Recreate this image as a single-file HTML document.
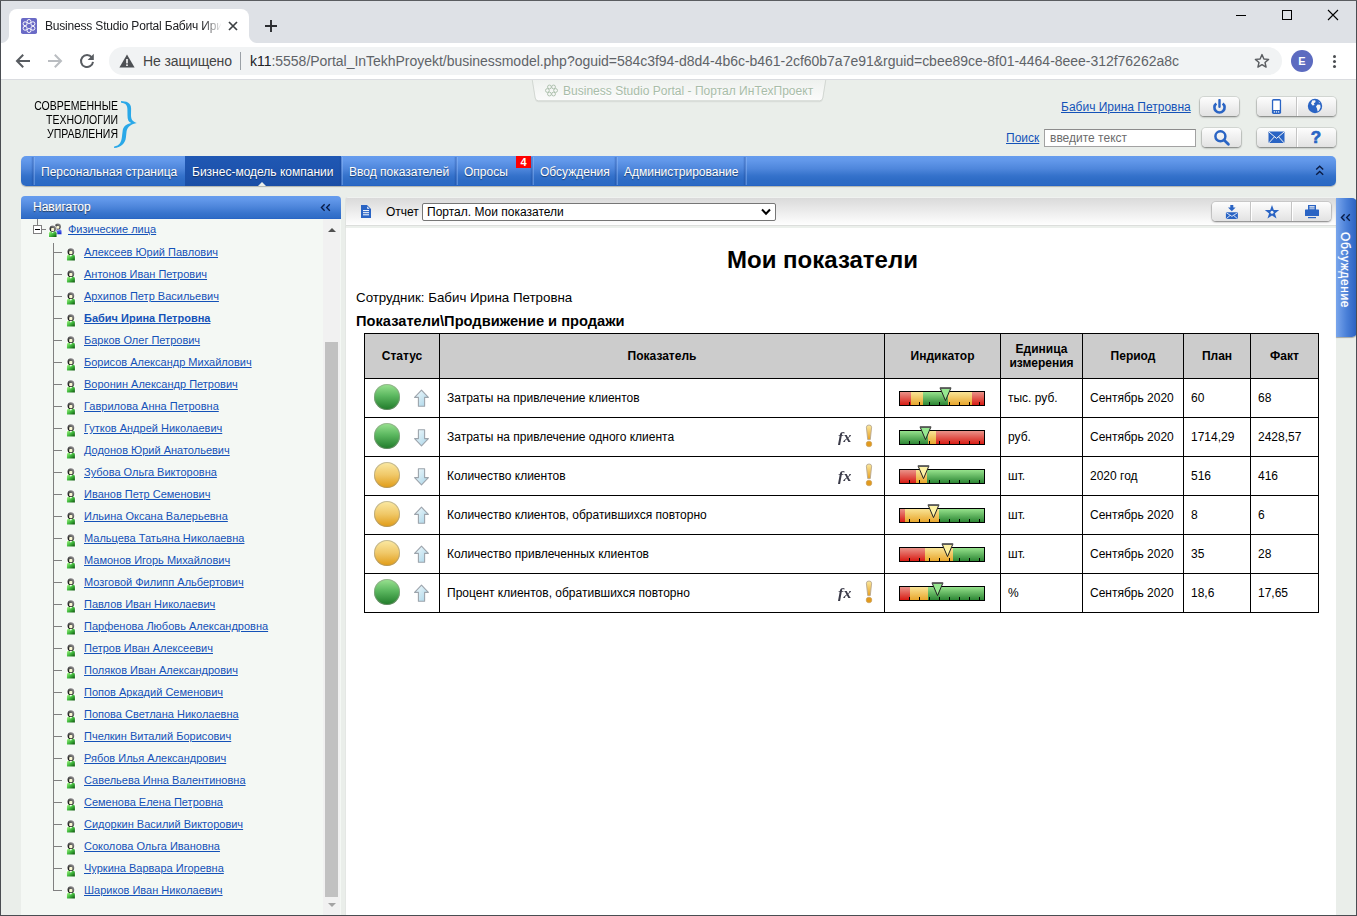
<!DOCTYPE html>
<html>
<head>
<meta charset="utf-8">
<style>
*{box-sizing:border-box;margin:0;padding:0}
html,body{width:1357px;height:916px;overflow:hidden;background:#eaeeea;font-family:"Liberation Sans",sans-serif;}
body{position:relative}
.abs{position:absolute}
a{color:#1452b8;text-decoration:underline}
/* chrome */
#winL{left:0;top:0;width:1px;height:916px;background:#4a4d52}
#winT{left:0;top:0;width:1357px;height:1px;background:#5a5c60}
#tabbar{left:1px;top:1px;width:1355px;height:42px;background:#dee1e6}
#tab{left:9px;top:9px;width:240px;height:34px;background:#fff;border-radius:8px 8px 0 0}
#tabtitle{left:45px;top:19px;font-size:12px;color:#202124;white-space:nowrap;width:176px;overflow:hidden;letter-spacing:-.19px;-webkit-mask-image:linear-gradient(90deg,#000 158px,transparent 177px);mask-image:linear-gradient(90deg,#000 158px,transparent 177px)}
#toolbar{left:1px;top:43px;width:1355px;height:37px;background:#fff;border-bottom:1px solid #dadce0}
#url{left:109px;top:47px;width:1173px;height:28px;border-radius:14px;background:#f1f3f4}
.urlt{font-size:14px;top:53px;white-space:nowrap;color:#202124}
/* page */
#page{left:1px;top:80px;width:1355px;height:836px;background:#eaeeea}
.btn{height:19px;border-radius:4px;background:linear-gradient(#fdfdfd,#e2e2e2);box-shadow:0 1px 2px rgba(0,0,0,.45),0 0 0 1px rgba(0,0,0,.08)}
#nav{left:21px;top:156px;width:1315px;height:30px;border-radius:5px;background:linear-gradient(#669cee 0%,#6298ea 15%,#4f87dc 42%,#3572cb 66%,#2d6bc5 82%,#2c6ac4 95%,#2160c4 100%);box-shadow:0 1px 1px rgba(0,0,0,.25)}
.navi{top:165px;font-size:12px;color:#fff;white-space:nowrap;text-shadow:0 1px 1px rgba(0,0,0,.45)}
.sep{top:157px;width:4px;height:28px;margin-left:-2px;background:linear-gradient(90deg,rgba(20,60,140,0) 0,rgba(20,60,140,.35) 50%,rgba(20,60,140,.5) 62%,rgba(150,190,250,.45) 63%,rgba(150,190,250,.4) 88%,rgba(150,190,250,0) 100%)}
#navact{left:185px;top:156px;width:156px;height:30px;background:linear-gradient(#2058b4,#1a4ea6)}
/* navigator */
#nvh{left:21px;top:196px;width:320px;height:23px;border-radius:4px 4px 0 0;background:linear-gradient(#669cee 0%,#6298ea 15%,#4f87dc 45%,#3874cd 75%,#2f6cc6 95%,#2361c4 100%)}
#nvb{left:21px;top:219px;width:320px;height:697px;background:#f4f8f4}
.ti{left:84px;margin-top:1px;font-size:11px;white-space:nowrap}
/* content */
#ctb{left:345px;top:197px;width:991px;height:31px;border-radius:3px 0 0 0;background:linear-gradient(#f0f2f0 0,#f0f2f0 1px,#dadada 1px,#e6e6e6 10px,#fdfdfd 27px,#fff 28px,#dcdedc 28px,#dcdedc 29px,#ecf0ec 29px,#ecf0ec 31px);border-left:1px solid #e0e3e0}
#cnt{left:345px;top:228px;width:991px;height:688px;background:#fff;border-left:1px solid #e4e7e4}
table.kpi{border-collapse:collapse;position:absolute;left:364px;top:334px;font-size:12px;color:#000}
table.kpi td,table.kpi th{border:1px solid #000;height:39px;padding:0 0 0 7px;text-align:left;vertical-align:middle;white-space:nowrap}
table.kpi th{background:#c8c8c8;height:44px;text-align:center;padding:0;font-weight:bold;line-height:14px}

#nvtrack{left:323px;top:219px;width:17px;height:697px;background:#f1f1f1}
#nvthumb{left:325px;top:342px;width:13px;height:555px;background:#c1c1c1}
.stub{left:53px;width:9px;height:1px;background:#808080}
.pi{left:66px}

#winR{left:1356px;top:0;width:1px;height:916px;background:#4a4d52}
.logo{left:0;width:118px;text-align:right;font-size:12px;color:#000;white-space:nowrap;transform:scaleX(.875);transform-origin:100% 50%;line-height:14px}
#ptab{left:534px;top:79px;width:292px;height:22px;background:#eef2ee;border:1px solid #d2d8d2;border-top:none;border-radius:0 0 6px 6px;transform:perspective(60px) rotateX(-6deg);transform-origin:50% 0}
.bsep{width:2px;height:19px;background:linear-gradient(90deg,#c4c4c4 50%,#fff 50%)}

.vl{top:333px;width:1px;height:280px;background:#000}
.hl{left:364px;width:955px;height:1px;background:#000}
.th{font-size:12px;font-weight:bold;text-align:center;line-height:14px;color:#000}
.td{font-size:12px;color:#000;white-space:nowrap;line-height:14px}
.circ{left:373.5px;width:26px;height:26px;border-radius:50%;box-shadow:inset 0 0 0 1px rgba(150,150,140,.55)}
.cg{background:linear-gradient(#9be392 0%,#5cb860 45%,#1f7a29 100%)}
.cy{background:linear-gradient(#fbeaa4 0%,#f0c868 50%,#e09a14 100%)}
.fx{left:838px;margin-top:2px;font-family:"Liberation Serif",serif;font-style:italic;font-weight:bold;font-size:14px;color:#3a3a48;line-height:16px;letter-spacing:.2px;transform:scaleX(1.12);transform-origin:0 50%}
.ind{left:899px;width:86px;height:15px;border:1px solid #000;overflow:hidden;background:#000}
.ind i{position:absolute;top:0;height:13px;margin-left:-1px}
.ind .sr{background:linear-gradient(#ea9288,#d81c14)}
.ind .sy{background:linear-gradient(#f9e496,#e8a62c)}
.ind .sg{background:linear-gradient(#96e28c,#2c8634)}
.ind b{position:absolute;left:9px;top:10px;width:71px;height:3px;background:repeating-linear-gradient(90deg,#000 0,#000 1px,transparent 1px,transparent 10px)}
#stab{left:1336px;top:198px;width:21px;height:139px;border-radius:0 5px 5px 0;background:linear-gradient(90deg,#7aa6ec 0%,#4a80d8 50%,#2a60c0 100%);box-shadow:0 1px 1px rgba(0,0,0,.3)}
#stabt{left:1337px;top:232px;width:15px;height:80px;writing-mode:vertical-rl;font-size:12px;color:#fff;letter-spacing:.62px;line-height:15px;white-space:nowrap;text-shadow:0 0 1px rgba(255,255,255,.7)}
.icorner{width:8px;height:8px}
</style>
</head>
<body>
<div class="abs" id="tabbar"></div>
<div class="abs" id="tab"></div>
<div class="abs icorner" style="left:1px;top:35px;background:radial-gradient(circle at 0 0,#dee1e6 7.5px,#fff 8.5px)"></div><div class="abs icorner" style="left:249px;top:35px;background:radial-gradient(circle at 100% 0,#dee1e6 7.5px,#fff 8.5px)"></div>
<div class="abs" id="tabtitle">Business Studio Portal Бабич Ирина</div>
<div class="abs" id="toolbar"></div>
<div class="abs" id="url"></div>
<div class="abs urlt" style="left:143px;color:#444;letter-spacing:-.1px">Не защищено</div>
<div class="abs urlt" style="left:250px;letter-spacing:-.025px">k11<span style="color:#5f6368">:5558/Portal_InTekhProyekt/businessmodel.php?oguid=584c3f94-d8d4-4b6c-b461-2cf60b7a7e91&amp;rguid=cbee89ce-8f01-4464-8eee-312f76262a8c</span></div>
<div class="abs" id="page"></div>

<div class="abs" id="nav"></div>
<div class="abs" id="navact"></div>
<div class="abs navi" style="left:41px">Персональная страница</div>
<div class="abs navi" style="left:192px">Бизнес-модель компании</div>
<div class="abs navi" style="left:349px">Ввод показателей</div>
<div class="abs navi" style="left:464px">Опросы</div>
<div class="abs navi" style="left:540px">Обсуждения</div>
<div class="abs navi" style="left:624px">Администрирование</div>


<!-- header -->
<div class="abs logo" style="top:99px">СОВРЕМЕННЫЕ</div>
<div class="abs logo" style="top:113px">ТЕХНОЛОГИИ</div>
<div class="abs logo" style="top:127px">УПРАВЛЕНИЯ</div>
<svg class="abs" style="left:110px;top:98px" width="30" height="53" viewBox="110 98 30 53"><path d="M121.0 101.1 C126 101.3 131 102.4 131.1 108.5 L131 115 C131 119.4 132.6 121.8 136.8 123 C131.5 124.2 127.6 126.5 126.6 131 L125.9 137.6 C125.3 143.6 121 147.7 114 148.1 L114.2 146.5 C119.4 145.9 121.4 142 121.9 137 L122.7 130.4 C123.4 126.4 126.4 124 131.3 123 C128.4 122 127.5 119.5 127.5 115.5 L127.4 109 C127.3 104.6 125 103 121.1 102.7 Z" fill="#2aa8e8"/></svg>
<svg class="abs" style="left:528px;top:80px" width="302" height="26" viewBox="528 80 302 26"><defs><linearGradient id="ptg" x1="0" y1="0" x2="0" y2="1"><stop offset="0" stop-color="#eef1ee"/><stop offset="1" stop-color="#fbfbfb"/></linearGradient></defs><path d="M532.2 80 L535.2 98.5 Q535.7 101.3 538.5 101.3 L819.5 101.3 Q822.3 101.3 822.8 98.5 L825.8 80 Z" fill="#d5dad5" transform="translate(0,1)" opacity=".7"/><path d="M532.2 79.5 L535.2 98 Q535.7 100.8 538.5 100.8 L819.5 100.8 Q822.3 100.8 822.8 98 L825.8 79.5 Z" fill="url(#ptg)" stroke="#d2d7d2" stroke-width="1"/></svg>
<div class="abs" style="left:563px;top:84px;font-size:12px;color:#a8bca8;white-space:nowrap;text-shadow:0 1px 0 #fff;letter-spacing:.02px">Business Studio Portal - Портал ИнТехПроект</div>
<svg class="abs" style="left:545px;top:84px" width="13" height="13" viewBox="0 0 13 13"><g fill="none" stroke="#a8bca8" stroke-width="0.9"><circle cx="10.60" cy="6.50" r="1.9"/><circle cx="8.55" cy="10.05" r="1.9"/><circle cx="4.45" cy="10.05" r="1.9"/><circle cx="2.40" cy="6.50" r="1.9"/><circle cx="4.45" cy="2.95" r="1.9"/><circle cx="8.55" cy="2.95" r="1.9"/></g></svg>
<a class="abs" style="left:1061px;top:100px;font-size:12px;white-space:nowrap">Бабич Ирина Петровна</a>
<a class="abs" style="left:1006px;top:131px;font-size:12px;white-space:nowrap">Поиск</a>
<div class="abs" style="left:1044px;top:129px;width:152px;height:18px;background:#fff;border:1px solid #a2a2a2;border-top-color:#8c8c8c;font-size:12px;color:#6c6c6c;line-height:16px;padding-left:5px">введите текст</div>
<div class="abs btn" style="left:1200px;top:97px;width:39px"></div>
<div class="abs btn" style="left:1257px;top:97px;width:78.5px"></div>
<div class="abs btn" style="left:1201.5px;top:128px;width:39px"></div>
<div class="abs btn" style="left:1257px;top:128px;width:78.5px"></div>
<div class="abs bsep" style="left:1296px;top:97px"></div>
<div class="abs bsep" style="left:1296px;top:128px"></div>
<svg class="abs" style="left:1212px;top:99px" width="15" height="16" viewBox="0 0 15 16"><path d="M4.3 4.4 A5.1 5.1 0 1 0 10.7 4.4" fill="none" stroke="#2a64c4" stroke-width="2.6"/><path d="M7.5 0.8 V7.8" stroke="#f4f4f4" stroke-width="4.6"/><path d="M7.5 1 V7.8" stroke="#2a64c4" stroke-width="2.4" stroke-linecap="round"/></svg>
<svg class="abs" style="left:1271px;top:98px" width="11" height="17" viewBox="0 0 11 17"><rect x="0.9" y="0.9" width="9.2" height="15" rx="1.6" fill="#2a64c4"/><rect x="2.2" y="2.6" width="6.6" height="9.4" fill="#fff"/><rect x="2.8" y="13.3" width="1.2" height="1.2" fill="#fff"/><rect x="4.9" y="13.3" width="1.2" height="1.2" fill="#fff"/><rect x="7" y="13.3" width="1.2" height="1.2" fill="#fff"/></svg>
<svg class="abs" style="left:1307px;top:98px" width="16" height="16" viewBox="0 0 16 16"><circle cx="8" cy="8" r="7.2" fill="#2a64c4"/><path d="M5.2 2.6 L8.2 2.2 L8.6 4 L6.8 5.4 L7.6 7 L5.6 7.4 L4 5.6 Z M10.6 6.4 L13.2 6.8 L13.6 9.2 L12 12.4 L10.6 13.4 L10 10.4 L9 8.4 Z M11.6 3.4 L12.8 4.4 L12.2 5.2 Z" fill="#f4f4f4"/></svg>
<svg class="abs" style="left:1213px;top:129px" width="18" height="18" viewBox="0 0 18 18"><circle cx="7.4" cy="7.3" r="5" fill="none" stroke="#2a64c4" stroke-width="2.5"/><path d="M11 11 L15.4 15.2" stroke="#2a64c4" stroke-width="2.8" stroke-linecap="round"/></svg>
<svg class="abs" style="left:1268px;top:131px" width="17" height="13" viewBox="0 0 17 13"><rect x="0.5" y="0.5" width="16" height="11.6" rx="0.8" fill="#2a64c4"/><path d="M1 1 L8.5 7.4 L16 1 M1 11.8 L6.4 5.8 M16 11.8 L10.6 5.8" stroke="#f4f4f4" stroke-width="1" fill="none"/></svg>
<div class="abs" style="left:1309px;top:128px;width:14px;font-size:17px;font-weight:bold;color:#2a64c4;line-height:19px;text-align:center;-webkit-text-stroke:.7px #2a64c4">?</div>
<div class="abs" style="left:516px;top:156px;width:15px;height:12px;background:#f00;color:#fff;font-size:11px;font-weight:bold;line-height:12px;text-align:center">4</div>
<div class="abs sep" style="left:33px"></div>
<div class="abs sep" style="left:341px"></div>
<div class="abs sep" style="left:456px"></div>
<div class="abs sep" style="left:532px"></div>
<div class="abs sep" style="left:616px"></div>
<div class="abs sep" style="left:745px"></div>
<div class="abs" style="left:258px;top:182px;width:0;height:0;border-left:4.5px solid transparent;border-right:4.5px solid transparent;border-bottom:4px solid #eaeeea"></div>
<svg class="abs" style="left:1315px;top:165px" width="10" height="11" viewBox="0 0 10 11"><path d="M1.2 4.6 L4.7 1.2 L8.2 4.6 M1.2 9.8 L4.7 6.4 L8.2 9.8" fill="none" stroke="#0b1c44" stroke-width="1.4" stroke-linejoin="miter"/></svg>
<div class="abs" id="nvh"></div>
<div class="abs" id="nvb"></div>
<svg width="0" height="0" style="position:absolute">
<defs>
<radialGradient id="hd" cx="0.4" cy="0.35" r="0.7"><stop offset="0" stop-color="#ffffee"/><stop offset="0.55" stop-color="#f2f2d0"/><stop offset="1" stop-color="#c8c8a0"/></radialGradient>
<linearGradient id="gb" x1="0" y1="0" x2="1" y2="1"><stop offset="0" stop-color="#a8f888"/><stop offset="0.5" stop-color="#44bc40"/><stop offset="1" stop-color="#0a520a"/></linearGradient><linearGradient id="hair" x1="0.8" y1="0" x2="0.1" y2="0.9"><stop offset="0" stop-color="#9a9a9a"/><stop offset="0.45" stop-color="#5a5a5a"/><stop offset="1" stop-color="#000"/></linearGradient>
<linearGradient id="bb" x1="0" y1="0" x2="0" y2="1"><stop offset="0" stop-color="#7a8cf0"/><stop offset="1" stop-color="#1020d0"/></linearGradient>
<g id="person">
<path d="M0.9 12.4 V8.6 Q0.9 6.6 3 6.6 H6.8 Q8.9 6.6 8.9 8.6 V12.4 Z" stroke="#fff" stroke-width="1.6" fill="#fff" opacity=".85"/>
<circle cx="4.9" cy="3.7" r="3.4" stroke="#fff" stroke-width="1.6" fill="#fff" opacity=".85"/>
<path d="M0.9 12.4 V8.6 Q0.9 6.6 3 6.6 H6.8 Q8.9 6.6 8.9 8.6 V12.4 Z" fill="url(#gb)"/>
<path d="M3.4 6.6 L4.9 8.7 L6.4 6.6 Z" fill="#fff"/>
<circle cx="4.9" cy="3.7" r="3.4" fill="url(#hair)"/>
<rect x="3.2" y="3" width="3.2" height="3.2" rx="0.9" fill="#fbf9d4"/>
</g>
</defs></svg>
<div class="abs" id="nvtrack"></div>
<div class="abs" id="nvthumb"></div>
<div class="abs" style="left:327.5px;top:228px;width:0;height:0;border-left:4px solid transparent;border-right:4px solid transparent;border-bottom:4px solid #505050"></div>
<div class="abs" style="left:328px;top:903px;width:0;height:0;border-left:4px solid transparent;border-right:4px solid transparent;border-top:4px solid #a3a3a3"></div>
<div class="abs" style="left:33px;top:200px;font-size:12px;font-weight:normal;color:#fff;text-shadow:0 1px 1px rgba(0,0,0,.6),0 0 1px rgba(255,255,255,.5)">Навигатор</div>
<svg class="abs" style="left:320px;top:203px" width="12" height="9" viewBox="0 0 12 9"><path d="M4.6 1.2 L1.4 4.5 L4.6 7.8 M9.8 1.2 L6.6 4.5 L9.8 7.8" fill="#3a76d6" stroke="#0b1c44" stroke-width="1.3" stroke-linejoin="miter"/></svg>
<div class="abs" style="left:37px;top:219px;width:1px;height:6px;background:#808080"></div>
<div class="abs" style="left:33px;top:225px;width:9px;height:9px;border:1px solid #808080;background:#fff"></div>
<div class="abs" style="left:35px;top:229px;width:5px;height:1px;background:#000"></div>
<div class="abs" style="left:42px;top:229px;width:4px;height:1px;background:#808080"></div>
<svg class="abs" style="left:48px;top:222.7px" width="15" height="15" viewBox="0 0 15 15">
<g transform="translate(5.5,0.2) scale(0.9)"><path d="M0.9 12.4 V8.6 Q0.9 6.6 3 6.6 H6.8 Q8.9 6.6 8.9 8.6 V12.4 Z" fill="url(#bb)"/><path d="M3.4 6.6 L4.9 8.7 L6.4 6.6 Z" fill="#e8ecff"/><circle cx="4.9" cy="3.7" r="3.4" fill="url(#hair)"/><rect x="3.2" y="3" width="3.2" height="3.2" rx="0.9" fill="#fbf9d4"/></g>
<g transform="translate(0.1,2.1) scale(0.95)"><use href="#person"/></g>
</svg>
<a class="abs" style="left:68px;top:223px;font-size:11px;white-space:nowrap">Физические лица</a>
<div class="abs" style="left:53px;top:243px;width:1px;height:648px;background:#808080"></div>
<!-- tree -->
<div class="abs stub" style="top:252px"></div><svg class="abs pi" style="top:248px" width="10" height="13" viewBox="0 0 10 13"><use href="#person"/></svg><a class="abs ti" style="top:245px">Алексеев Юрий Павлович</a>
<div class="abs stub" style="top:274px"></div><svg class="abs pi" style="top:270px" width="10" height="13" viewBox="0 0 10 13"><use href="#person"/></svg><a class="abs ti" style="top:267px">Антонов Иван Петрович</a>
<div class="abs stub" style="top:296px"></div><svg class="abs pi" style="top:292px" width="10" height="13" viewBox="0 0 10 13"><use href="#person"/></svg><a class="abs ti" style="top:289px">Архипов Петр Васильевич</a>
<div class="abs stub" style="top:318px"></div><svg class="abs pi" style="top:314px" width="10" height="13" viewBox="0 0 10 13"><use href="#person"/></svg><a class="abs ti" style="top:311px;font-weight:bold">Бабич Ирина Петровна</a>
<div class="abs stub" style="top:340px"></div><svg class="abs pi" style="top:336px" width="10" height="13" viewBox="0 0 10 13"><use href="#person"/></svg><a class="abs ti" style="top:333px">Барков Олег Петрович</a>
<div class="abs stub" style="top:362px"></div><svg class="abs pi" style="top:358px" width="10" height="13" viewBox="0 0 10 13"><use href="#person"/></svg><a class="abs ti" style="top:355px">Борисов Александр Михайлович</a>
<div class="abs stub" style="top:384px"></div><svg class="abs pi" style="top:380px" width="10" height="13" viewBox="0 0 10 13"><use href="#person"/></svg><a class="abs ti" style="top:377px">Воронин Александр Петрович</a>
<div class="abs stub" style="top:406px"></div><svg class="abs pi" style="top:402px" width="10" height="13" viewBox="0 0 10 13"><use href="#person"/></svg><a class="abs ti" style="top:399px">Гаврилова Анна Петровна</a>
<div class="abs stub" style="top:428px"></div><svg class="abs pi" style="top:424px" width="10" height="13" viewBox="0 0 10 13"><use href="#person"/></svg><a class="abs ti" style="top:421px">Гутков Андрей Николаевич</a>
<div class="abs stub" style="top:450px"></div><svg class="abs pi" style="top:446px" width="10" height="13" viewBox="0 0 10 13"><use href="#person"/></svg><a class="abs ti" style="top:443px">Додонов Юрий Анатольевич</a>
<div class="abs stub" style="top:472px"></div><svg class="abs pi" style="top:468px" width="10" height="13" viewBox="0 0 10 13"><use href="#person"/></svg><a class="abs ti" style="top:465px">Зубова Ольга Викторовна</a>
<div class="abs stub" style="top:494px"></div><svg class="abs pi" style="top:490px" width="10" height="13" viewBox="0 0 10 13"><use href="#person"/></svg><a class="abs ti" style="top:487px">Иванов Петр Семенович</a>
<div class="abs stub" style="top:516px"></div><svg class="abs pi" style="top:512px" width="10" height="13" viewBox="0 0 10 13"><use href="#person"/></svg><a class="abs ti" style="top:509px">Ильина Оксана Валерьевна</a>
<div class="abs stub" style="top:538px"></div><svg class="abs pi" style="top:534px" width="10" height="13" viewBox="0 0 10 13"><use href="#person"/></svg><a class="abs ti" style="top:531px">Мальцева Татьяна Николаевна</a>
<div class="abs stub" style="top:560px"></div><svg class="abs pi" style="top:556px" width="10" height="13" viewBox="0 0 10 13"><use href="#person"/></svg><a class="abs ti" style="top:553px">Мамонов Игорь Михайлович</a>
<div class="abs stub" style="top:582px"></div><svg class="abs pi" style="top:578px" width="10" height="13" viewBox="0 0 10 13"><use href="#person"/></svg><a class="abs ti" style="top:575px">Мозговой Филипп Альбертович</a>
<div class="abs stub" style="top:604px"></div><svg class="abs pi" style="top:600px" width="10" height="13" viewBox="0 0 10 13"><use href="#person"/></svg><a class="abs ti" style="top:597px">Павлов Иван Николаевич</a>
<div class="abs stub" style="top:626px"></div><svg class="abs pi" style="top:622px" width="10" height="13" viewBox="0 0 10 13"><use href="#person"/></svg><a class="abs ti" style="top:619px">Парфенова Любовь Александровна</a>
<div class="abs stub" style="top:648px"></div><svg class="abs pi" style="top:644px" width="10" height="13" viewBox="0 0 10 13"><use href="#person"/></svg><a class="abs ti" style="top:641px">Петров Иван Алексеевич</a>
<div class="abs stub" style="top:670px"></div><svg class="abs pi" style="top:666px" width="10" height="13" viewBox="0 0 10 13"><use href="#person"/></svg><a class="abs ti" style="top:663px">Поляков Иван Александрович</a>
<div class="abs stub" style="top:692px"></div><svg class="abs pi" style="top:688px" width="10" height="13" viewBox="0 0 10 13"><use href="#person"/></svg><a class="abs ti" style="top:685px">Попов Аркадий Семенович</a>
<div class="abs stub" style="top:714px"></div><svg class="abs pi" style="top:710px" width="10" height="13" viewBox="0 0 10 13"><use href="#person"/></svg><a class="abs ti" style="top:707px">Попова Светлана Николаевна</a>
<div class="abs stub" style="top:736px"></div><svg class="abs pi" style="top:732px" width="10" height="13" viewBox="0 0 10 13"><use href="#person"/></svg><a class="abs ti" style="top:729px">Пчелкин Виталий Борисович</a>
<div class="abs stub" style="top:758px"></div><svg class="abs pi" style="top:754px" width="10" height="13" viewBox="0 0 10 13"><use href="#person"/></svg><a class="abs ti" style="top:751px">Рябов Илья Александрович</a>
<div class="abs stub" style="top:780px"></div><svg class="abs pi" style="top:776px" width="10" height="13" viewBox="0 0 10 13"><use href="#person"/></svg><a class="abs ti" style="top:773px">Савельева Инна Валентиновна</a>
<div class="abs stub" style="top:802px"></div><svg class="abs pi" style="top:798px" width="10" height="13" viewBox="0 0 10 13"><use href="#person"/></svg><a class="abs ti" style="top:795px">Семенова Елена Петровна</a>
<div class="abs stub" style="top:824px"></div><svg class="abs pi" style="top:820px" width="10" height="13" viewBox="0 0 10 13"><use href="#person"/></svg><a class="abs ti" style="top:817px">Сидоркин Василий Викторович</a>
<div class="abs stub" style="top:846px"></div><svg class="abs pi" style="top:842px" width="10" height="13" viewBox="0 0 10 13"><use href="#person"/></svg><a class="abs ti" style="top:839px">Соколова Ольга Ивановна</a>
<div class="abs stub" style="top:868px"></div><svg class="abs pi" style="top:864px" width="10" height="13" viewBox="0 0 10 13"><use href="#person"/></svg><a class="abs ti" style="top:861px">Чуркина Варвара Игоревна</a>
<div class="abs stub" style="top:890px"></div><svg class="abs pi" style="top:886px" width="10" height="13" viewBox="0 0 10 13"><use href="#person"/></svg><a class="abs ti" style="top:883px">Шариков Иван Николаевич</a>
<div class="abs" id="ctb"></div>
<div class="abs" id="cnt"></div>
<svg width="0" height="0" style="position:absolute"><defs>
<linearGradient id="ag" x1="0" y1="0" x2="1" y2="1"><stop offset="0" stop-color="#f2fafc"/><stop offset="1" stop-color="#a8d4e8"/></linearGradient>
<g id="arrup"><path d="M8.5 1.2 L15.4 8.4 L11.6 8.4 L11.6 17.2 L5.4 17.2 L5.4 8.4 L1.6 8.4 Z" fill="url(#ag)" stroke="#9ca4ac" stroke-width="1.1" stroke-linejoin="round"/></g>
<g id="arrdn"><path d="M8.5 17.8 L15.4 10.6 L11.6 10.6 L11.6 1.8 L5.4 1.8 L5.4 10.6 L1.6 10.6 Z" fill="url(#ag)" stroke="#9ca4ac" stroke-width="1.1" stroke-linejoin="round"/></g>
<linearGradient id="eg" x1="0" y1="0" x2="0" y2="1"><stop offset="0" stop-color="#fbe9a0"/><stop offset="1" stop-color="#e8a020"/></linearGradient>
<g id="excl"><path d="M2.4 3.2 Q2.4 1 5 1 Q7.6 1 7.6 3.2 L6.3 15.6 L3.7 15.6 Z" fill="url(#eg)" stroke="#b8a890" stroke-width="0.9"/><circle cx="5" cy="20" r="2.8" fill="#e29a1c" stroke="#c8a060" stroke-width="0.7"/></g>
<g id="mkg"><path d="M1.2 1.2 L11.8 1.2 L6.5 13.6 Z" fill="#96e890" stroke="#222" stroke-width="1" stroke-linejoin="miter"/><rect x="0.8" y="0.2" width="11.4" height="1.5" fill="#5a5a5a"/></g>
<g id="mky"><path d="M1.2 1.2 L11.8 1.2 L6.5 13.6 Z" fill="#fdf2a4" stroke="#222" stroke-width="1" stroke-linejoin="miter"/><rect x="0.8" y="0.2" width="11.4" height="1.5" fill="#5a5a5a"/></g>
</defs></svg>

<svg class="abs" style="left:360px;top:204px" width="12" height="15" viewBox="0 0 12 15"><path d="M1 1 H7 L11 5 V14 H1 Z" fill="#2a64c4"/><path d="M7.2 2.4 V4.8 H9.6 Z" fill="#fff"/><path d="M3 6.6 H9 M3 8.7 H9 M3 10.8 H9" stroke="#fff" stroke-width="1"/></svg>
<div class="abs" style="left:386px;top:205px;font-size:12px;color:#000">Отчет</div>
<div class="abs" style="left:422px;top:203px;width:354px;height:18px;background:#fff;border:1px solid #767676;border-radius:2px;font-size:12px;line-height:16px;padding-left:4px;color:#000">Портал. Мои показатели</div>
<svg class="abs" style="left:761px;top:208px" width="10" height="8" viewBox="0 0 10 8"><path d="M1 1.5 L5 5.8 L9 1.5" fill="none" stroke="#000" stroke-width="2"/></svg>
<div class="abs btn" style="left:1211.5px;top:202px;width:119px"></div>
<div class="abs bsep" style="left:1250px;top:202px"></div>
<div class="abs bsep" style="left:1290.5px;top:202px"></div>
<svg class="abs" style="left:1225px;top:204px" width="14" height="16" viewBox="0 0 14 16"><path d="M5.3 1 H8.3 V3.4 H10.6 L6.8 7.2 L3 3.4 H5.3 Z" fill="#2a64c4"/><rect x="0.9" y="8.2" width="12" height="6.8" rx="0.8" fill="#2a64c4"/><path d="M1.4 8.8 L6.9 12.4 L12.4 8.8 M1.4 14.6 L5.2 11.4 M12.4 14.6 L8.6 11.4" stroke="#e8eefa" stroke-width="0.9" fill="none"/></svg>
<svg class="abs" style="left:1264px;top:204px" width="16" height="16" viewBox="0 0 16 16"><path d="M8 0.9 L9.8 6 L15.2 6.1 L10.9 9.4 L12.5 14.6 L8 11.5 L3.5 14.6 L5.1 9.4 L0.8 6.1 L6.2 6 Z" fill="#2a64c4"/><circle cx="8" cy="8.2" r="1.5" fill="#f2f2f2"/></svg>
<svg class="abs" style="left:1304px;top:204px" width="16" height="15" viewBox="0 0 16 15"><rect x="4" y="1" width="8" height="5.4" fill="#2a64c4"/><rect x="5.4" y="2.2" width="5.2" height="1.3" fill="#f2f2f2"/><rect x="5.4" y="4.4" width="5.2" height="1" fill="#f2f2f2"/><rect x="1" y="5.4" width="14" height="6.6" rx="0.6" fill="#2a64c4"/><rect x="4" y="13" width="8" height="1.2" fill="#2a64c4"/></svg>
<div class="abs" style="left:345px;top:246px;width:955px;text-align:center;font-size:24px;font-weight:bold;color:#000;line-height:28px;padding-left:0">Мои показатели</div>
<div class="abs" style="left:356px;top:290px;font-size:13.33px;color:#000;white-space:nowrap">Сотрудник: Бабич Ирина Петровна</div>
<div class="abs" style="left:356px;top:313px;font-size:14.67px;font-weight:bold;color:#000;white-space:nowrap">Показатели\Продвижение и продажи</div>
<!-- side tab -->
<div class="abs" id="stab"></div>
<svg class="abs" style="left:1340px;top:213px" width="12" height="9" viewBox="0 0 12 9"><path d="M4.6 1.2 L1.4 4.5 L4.6 7.8 M9.8 1.2 L6.6 4.5 L9.8 7.8" fill="#3a76d6" stroke="#0b1c44" stroke-width="1.3" stroke-linejoin="miter"/></svg>
<div class="abs" id="stabt">Обсуждение</div>
<!-- content -->
<div class="abs" style="left:365px;top:334px;width:953px;height:44px;background:#ccc"></div>
<div class="abs vl" style="left:364px"></div>
<div class="abs vl" style="left:439px"></div>
<div class="abs vl" style="left:884px"></div>
<div class="abs vl" style="left:1000px"></div>
<div class="abs vl" style="left:1082px"></div>
<div class="abs vl" style="left:1183px"></div>
<div class="abs vl" style="left:1250px"></div>
<div class="abs vl" style="left:1318px"></div>
<div class="abs hl" style="top:333px"></div>
<div class="abs hl" style="top:378px"></div>
<div class="abs hl" style="top:417px"></div>
<div class="abs hl" style="top:456px"></div>
<div class="abs hl" style="top:495px"></div>
<div class="abs hl" style="top:534px"></div>
<div class="abs hl" style="top:573px"></div>
<div class="abs hl" style="top:612px"></div>
<div class="abs th" style="left:365px;width:74px;top:349px">Статус</div>
<div class="abs th" style="left:440px;width:444px;top:349px">Показатель</div>
<div class="abs th" style="left:885px;width:115px;top:349px">Индикатор</div>
<div class="abs th" style="left:1001px;width:81px;top:342px">Единица<br>измерения</div>
<div class="abs th" style="left:1083px;width:100px;top:349px">Период</div>
<div class="abs th" style="left:1184px;width:66px;top:349px">План</div>
<div class="abs th" style="left:1251px;width:67px;top:349px">Факт</div>
<div class="abs circ cg" style="top:384px"></div>
<svg class="abs" style="left:413px;top:389px" width="17" height="19" viewBox="0 0 17 19"><use href="#arrup"/></svg>
<div class="abs td" style="left:447px;top:391px">Затраты на привлечение клиентов</div>
<div class="abs ind" style="top:391px">
<i class="sr" style="left:0px;width:12px"></i>
<i class="sy" style="left:12px;width:12px"></i>
<i class="sg" style="left:24px;width:25px"></i>
<i class="sy" style="left:49px;width:24px"></i>
<i class="sr" style="left:73px;width:13px"></i>
<b></b></div>
<svg class="abs" style="left:939.0px;top:387px" width="13" height="15" viewBox="0 0 13 15"><use href="#mkg"/></svg>
<div class="abs td" style="left:1008px;top:391px">тыс. руб.</div>
<div class="abs td" style="left:1090px;top:391px">Сентябрь 2020</div>
<div class="abs td" style="left:1191px;top:391px">60</div>
<div class="abs td" style="left:1258px;top:391px">68</div>
<div class="abs circ cg" style="top:423px"></div>
<svg class="abs" style="left:413px;top:428px" width="17" height="19" viewBox="0 0 17 19"><use href="#arrdn"/></svg>
<div class="abs td" style="left:447px;top:430px">Затраты на привлечение одного клиента</div>
<div class="abs fx" style="top:428px">fx</div>
<svg class="abs" style="left:864px;top:424px" width="10" height="24" viewBox="0 0 10 24"><use href="#excl"/></svg>
<div class="abs ind" style="top:430px">
<i class="sg" style="left:0px;width:29px"></i>
<i class="sy" style="left:29px;width:8px"></i>
<i class="sr" style="left:37px;width:49px"></i>
<b></b></div>
<svg class="abs" style="left:919.1px;top:426px" width="13" height="15" viewBox="0 0 13 15"><use href="#mkg"/></svg>
<div class="abs td" style="left:1008px;top:430px">руб.</div>
<div class="abs td" style="left:1090px;top:430px">Сентябрь 2020</div>
<div class="abs td" style="left:1191px;top:430px">1714,29</div>
<div class="abs td" style="left:1258px;top:430px">2428,57</div>
<div class="abs circ cy" style="top:462px"></div>
<svg class="abs" style="left:413px;top:467px" width="17" height="19" viewBox="0 0 17 19"><use href="#arrdn"/></svg>
<div class="abs td" style="left:447px;top:469px">Количество клиентов</div>
<div class="abs fx" style="top:467px">fx</div>
<svg class="abs" style="left:864px;top:463px" width="10" height="24" viewBox="0 0 10 24"><use href="#excl"/></svg>
<div class="abs ind" style="top:469px">
<i class="sr" style="left:0px;width:17px"></i>
<i class="sy" style="left:17px;width:11px"></i>
<i class="sg" style="left:28px;width:58px"></i>
<b></b></div>
<svg class="abs" style="left:917.0px;top:465px" width="13" height="15" viewBox="0 0 13 15"><use href="#mky"/></svg>
<div class="abs td" style="left:1008px;top:469px">шт.</div>
<div class="abs td" style="left:1090px;top:469px">2020 год</div>
<div class="abs td" style="left:1191px;top:469px">516</div>
<div class="abs td" style="left:1258px;top:469px">416</div>
<div class="abs circ cy" style="top:501px"></div>
<svg class="abs" style="left:413px;top:506px" width="17" height="19" viewBox="0 0 17 19"><use href="#arrup"/></svg>
<div class="abs td" style="left:447px;top:508px">Количество клиентов, обратившихся повторно</div>
<div class="abs ind" style="top:508px">
<i class="sr" style="left:0px;width:6px"></i>
<i class="sy" style="left:6px;width:34px"></i>
<i class="sg" style="left:40px;width:46px"></i>
<b></b></div>
<svg class="abs" style="left:927.2px;top:504px" width="13" height="15" viewBox="0 0 13 15"><use href="#mky"/></svg>
<div class="abs td" style="left:1008px;top:508px">шт.</div>
<div class="abs td" style="left:1090px;top:508px">Сентябрь 2020</div>
<div class="abs td" style="left:1191px;top:508px">8</div>
<div class="abs td" style="left:1258px;top:508px">6</div>
<div class="abs circ cy" style="top:540px"></div>
<svg class="abs" style="left:413px;top:545px" width="17" height="19" viewBox="0 0 17 19"><use href="#arrup"/></svg>
<div class="abs td" style="left:447px;top:547px">Количество привлеченных клиентов</div>
<div class="abs ind" style="top:547px">
<i class="sr" style="left:0px;width:26px"></i>
<i class="sy" style="left:26px;width:28px"></i>
<i class="sg" style="left:54px;width:32px"></i>
<b></b></div>
<svg class="abs" style="left:941.2px;top:543px" width="13" height="15" viewBox="0 0 13 15"><use href="#mky"/></svg>
<div class="abs td" style="left:1008px;top:547px">шт.</div>
<div class="abs td" style="left:1090px;top:547px">Сентябрь 2020</div>
<div class="abs td" style="left:1191px;top:547px">35</div>
<div class="abs td" style="left:1258px;top:547px">28</div>
<div class="abs circ cg" style="top:579px"></div>
<svg class="abs" style="left:413px;top:584px" width="17" height="19" viewBox="0 0 17 19"><use href="#arrup"/></svg>
<div class="abs td" style="left:447px;top:586px">Процент клиентов, обратившихся повторно</div>
<div class="abs fx" style="top:584px">fx</div>
<svg class="abs" style="left:864px;top:580px" width="10" height="24" viewBox="0 0 10 24"><use href="#excl"/></svg>
<div class="abs ind" style="top:586px">
<i class="sr" style="left:0px;width:11px"></i>
<i class="sy" style="left:11px;width:18px"></i>
<i class="sg" style="left:29px;width:57px"></i>
<b></b></div>
<svg class="abs" style="left:931.1px;top:582px" width="13" height="15" viewBox="0 0 13 15"><use href="#mkg"/></svg>
<div class="abs td" style="left:1008px;top:586px">%</div>
<div class="abs td" style="left:1090px;top:586px">Сентябрь 2020</div>
<div class="abs td" style="left:1191px;top:586px">18,6</div>
<div class="abs td" style="left:1258px;top:586px">17,65</div>
<!-- chrome icons -->
<svg class="abs" style="left:21px;top:18px" width="16" height="16" viewBox="0 0 16 16"><rect x="0" y="0" width="16" height="16" rx="1.8" fill="#6a6ac6"/><g fill="none" stroke="#fff" stroke-width="0.95"><circle cx="11.90" cy="10.25" r="2.0"/><circle cx="8.00" cy="12.50" r="2.0"/><circle cx="4.10" cy="10.25" r="2.0"/><circle cx="4.10" cy="5.75" r="2.0"/><circle cx="8.00" cy="3.50" r="2.0"/><circle cx="11.90" cy="5.75" r="2.0"/></g></svg>
<svg class="abs" style="left:226px;top:19px" width="14" height="14" viewBox="0 0 14 14"><path d="M3 3 L11 11 M11 3 L3 11" stroke="#3c4043" stroke-width="1.7" fill="none"/></svg>
<svg class="abs" style="left:263px;top:18px" width="16" height="16" viewBox="0 0 16 16"><path d="M8 2 V14 M2 8 H14" stroke="#2a2c30" stroke-width="1.9" fill="none"/></svg>
<svg class="abs" style="left:14px;top:52px" width="18" height="18" viewBox="0 0 18 18"><path d="M16 9 H3.4 M9.2 2.8 L3 9 L9.2 15.2" stroke="#585c61" stroke-width="2" fill="none"/></svg>
<svg class="abs" style="left:46px;top:52px" width="18" height="18" viewBox="0 0 18 18"><path d="M2 9 H14.6 M8.8 2.8 L15 9 L8.8 15.2" stroke="#babdc1" stroke-width="2" fill="none"/></svg>
<svg class="abs" style="left:78px;top:52px" width="18" height="18" viewBox="0 0 18 18"><path d="M13.8 5.4 A6 6 0 1 0 15 9.8" stroke="#585c61" stroke-width="2" fill="none"/><path d="M15.8 1.8 V8 H9.6 Z" fill="#585c61"/></svg>
<svg class="abs" style="left:119px;top:54px" width="16" height="14" viewBox="0 0 16 14"><path d="M8 0.6 L15.6 13.4 H0.4 Z" fill="#4d5054"/><rect x="7.2" y="5" width="1.6" height="4.4" fill="#fff"/><rect x="7.2" y="10.4" width="1.6" height="1.6" fill="#fff"/></svg>
<div class="abs" style="left:240px;top:52px;width:1px;height:18px;background:#9aa0a6"></div>
<svg class="abs" style="left:1254px;top:53px" width="16" height="16" viewBox="0 0 16 16"><path d="M8 1.6 L9.9 6 L14.6 6.4 L11 9.5 L12.1 14.1 L8 11.6 L3.9 14.1 L5 9.5 L1.4 6.4 L6.1 6 Z" fill="none" stroke="#5a5d61" stroke-width="1.4" stroke-linejoin="round"/></svg>
<div class="abs" style="left:1291px;top:50px;width:22px;height:22px;border-radius:11px;background:#5c6bc0;color:#fff;font-size:11px;font-weight:bold;text-align:center;line-height:22px">E</div>
<div class="abs" style="left:1333px;top:55px;width:3px;height:3px;border-radius:2px;background:#4a4d51;box-shadow:0 5px 0 #4a4d51,0 10px 0 #4a4d51"></div>
<div class="abs" style="left:1236px;top:15px;width:10px;height:1px;background:#000"></div>
<div class="abs" style="left:1282px;top:10px;width:10px;height:10px;border:1px solid #000"></div>
<svg class="abs" style="left:1327px;top:9px" width="12" height="12" viewBox="0 0 12 12"><path d="M1 1 L11 11 M11 1 L1 11" stroke="#000" stroke-width="1.1" fill="none"/></svg>
<div class="abs" id="winR"></div><div class="abs" style="left:0;top:915px;width:1357px;height:1px;background:#4a4d52"></div>
<div class="abs" id="winL"></div>
<div class="abs" id="winT"></div>
</body>
</html>
